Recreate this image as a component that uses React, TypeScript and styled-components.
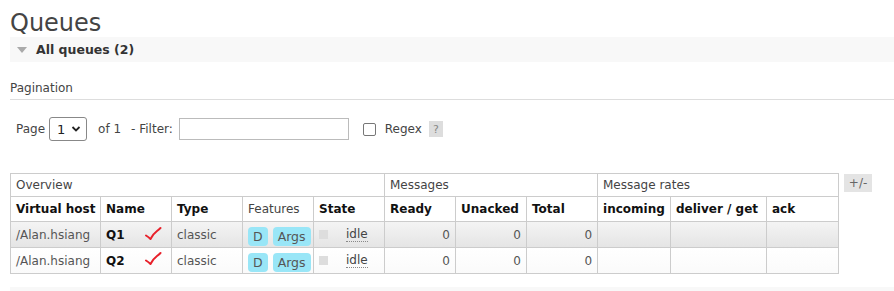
import React from "react";
import styled, { createGlobalStyle } from "styled-components";

const Global = createGlobalStyle`
  html, body { margin: 0; padding: 0; background: #fff; }
  body { font-family: "DejaVu Sans", Verdana, sans-serif; font-size: 12px; color: #444; }
`;

const Page = styled.div`
  padding: 0 0 0 10px;
  overflow: hidden;
`;

const Title = styled.h1`
  margin: 0;
  padding-top: 9px;
  height: 28px;
  font-size: 24px;
  font-weight: normal;
  line-height: 28px;
  color: #444;
`;

const SectionBar = styled.div`
  display: flex;
  align-items: center;
  gap: 9px;
  height: 25px;
  padding-left: 7px;
  background: #f8f8f8;
  font-weight: bold;
  font-size: 12.5px;
  color: #333;
`;

const Triangle = styled.span`
  width: 0;
  height: 0;
  border-left: 5px solid transparent;
  border-right: 5px solid transparent;
  border-top: 6px solid #aaa;
`;

const SubHeading = styled.h3`
  margin: 18px 0 0 0;
  padding-bottom: 3px;
  font-size: 12px;
  font-weight: normal;
  line-height: 16px;
  color: #444;
  border-bottom: 1px solid #ddd;
`;

const Controls = styled.div`
  display: flex;
  align-items: center;
  height: 24px;
  margin-top: 17px;
  padding-left: 6px;
  color: #444;
`;

const SelectBox = styled.div`
  display: flex;
  align-items: center;
  justify-content: space-between;
  box-sizing: border-box;
  width: 38px;
  height: 24px;
  margin: 0 11px 0 4px;
  padding: 0 5px 0 7px;
  border: 1px solid #888;
  border-radius: 3px;
  color: #222;
  font-size: 13px;
`;

const Label = styled.span<{ $gap?: number }>`
  margin-right: ${(p) => p.$gap ?? 0}px;
  white-space: pre;
`;

const TextInput = styled.div`
  box-sizing: border-box;
  width: 170px;
  height: 22px;
  margin-left: 6px;
  border: 1px solid #bbb;
  background: #fff;
`;

const Check = styled.span`
  box-sizing: border-box;
  width: 13px;
  height: 13px;
  margin: 0 9px 0 14px;
  border: 1px solid #777;
  border-radius: 2px;
`;

const Help = styled.span`
  display: inline-flex;
  align-items: center;
  justify-content: center;
  width: 14px;
  height: 16px;
  margin-left: 7px;
  background: #ddd;
  color: #888;
  font-size: 11px;
`;

const TableRow = styled.div`
  display: flex;
  align-items: flex-start;
  gap: 5px;
  margin-top: 32px;
`;

const Table = styled.table`
  border-collapse: collapse;
  table-layout: fixed;
  width: 828px;
  font-size: 12px;
`;

const GroupTh = styled.th`
  height: 22px;
  padding: 0 5px;
  border: 1px solid #ccc;
  text-align: left;
  font-weight: normal;
  color: #444;
`;

const Th = styled.th<{ $plain?: boolean }>`
  height: 24px;
  padding: 0 5px;
  border: 1px solid #ccc;
  text-align: left;
  font-weight: ${(p) => (p.$plain ? "normal" : "bold")};
  color: ${(p) => (p.$plain ? "#444" : "#111")};
  white-space: nowrap;
`;

const Tr = styled.tr<{ $alt?: boolean }>`
  background: ${(p) =>
    p.$alt ? "linear-gradient(#f4f4f4, #e4e4e4)" : "linear-gradient(#ffffff, #fafafa)"};
`;

const Td = styled.td<{ $num?: boolean; $bold?: boolean }>`
  height: 25px;
  padding: 0 5px;
  border: 1px solid #ccc;
  text-align: ${(p) => (p.$num ? "right" : "left")};
  color: ${(p) => (p.$bold ? "#111" : "#555")};
  font-weight: ${(p) => (p.$bold ? "bold" : "normal")};
  white-space: nowrap;
`;

const NameCell = styled.div`
  display: flex;
  align-items: center;
  justify-content: space-between;
  padding-right: 2px;
`;

const Badges = styled.div`
  display: flex;
  gap: 5px;
  padding-top: 3px;
`;

const Badge = styled.span`
  display: inline-block;
  padding: 2px 5px;
  border-radius: 4px;
  background: #99e6f7;
  color: #555;
  font-size: 12.5px;
`;

const StateCell = styled.div`
  display: flex;
  align-items: center;
  gap: 18px;
`;

const StateBox = styled.span`
  width: 9px;
  height: 9px;
  background: #ddd;
`;

const Idle = styled.span`
  color: #444;
  border-bottom: 1px dotted #888;
  line-height: 13px;
`;

const Toggle = styled.span`
  display: inline-flex;
  align-items: center;
  justify-content: center;
  width: 28px;
  height: 18px;
  margin-top: 1px;
  background: #e4e4e4;
  color: #666;
  font-size: 12px;
`;

const BottomBar = styled.div`
  height: 20px;
  margin-top: 13px;
  background: #f8f8f8;
`;

const Tick = ({ dy = 0 }: { dy?: number }) => (
  <svg width="20" height="16" viewBox="0 0 20 16" style={{ marginTop: dy }}>
    <path
      d="M2 9.5 Q4.5 11 6.5 13 Q9 8 13 5 Q15 3.5 16.5 2"
      fill="none"
      stroke="#e8202a"
      strokeWidth="2"
      strokeLinecap="round"
      strokeLinejoin="round"
    />
  </svg>
);

const rows = [
  { vhost: "/Alan.hsiang", name: "Q1", dy: -2 },
  { vhost: "/Alan.hsiang", name: "Q2", dy: -4 },
];

const widths = [90, 71, 71, 71, 71, 71, 71, 71, 73, 96, 72];

export default function App() {
  return (
    <>
      <Global />
      <Page>
        <Title>Queues</Title>
        <SectionBar>
          <Triangle />
          <span>All queues (2)</span>
        </SectionBar>
        <SubHeading>Pagination</SubHeading>
        <Controls>
          <Label>Page</Label>
          <SelectBox>
            <span>1</span>
            <svg width="10" height="8" viewBox="0 0 10 8">
              <path d="M1.5 2 L5 5.5 L8.5 2" fill="none" stroke="#222" strokeWidth="1.8" />
            </svg>
          </SelectBox>
          <Label $gap={10}>of 1</Label>
          <Label>- Filter:</Label>
          <TextInput />
          <Check />
          <Label>Regex</Label>
          <Help>?</Help>
        </Controls>
        <TableRow>
          <Table>
            <colgroup>
              {widths.map((w, i) => (
                <col key={i} style={{ width: w }} />
              ))}
            </colgroup>
            <thead>
              <tr>
                <GroupTh colSpan={5}>Overview</GroupTh>
                <GroupTh colSpan={3}>Messages</GroupTh>
                <GroupTh colSpan={3}>Message rates</GroupTh>
              </tr>
              <tr>
                <Th>Virtual host</Th>
                <Th>Name</Th>
                <Th>Type</Th>
                <Th $plain>Features</Th>
                <Th>State</Th>
                <Th>Ready</Th>
                <Th>Unacked</Th>
                <Th>Total</Th>
                <Th>incoming</Th>
                <Th>deliver / get</Th>
                <Th>ack</Th>
              </tr>
            </thead>
            <tbody>
              {rows.map((r, i) => (
                <Tr key={r.name} $alt={i === 0}>
                  <Td>{r.vhost}</Td>
                  <Td $bold>
                    <NameCell>
                      <span>{r.name}</span>
                      <Tick dy={r.dy} />
                    </NameCell>
                  </Td>
                  <Td>classic</Td>
                  <Td>
                    <Badges>
                      <Badge>D</Badge>
                      <Badge>Args</Badge>
                    </Badges>
                  </Td>
                  <Td>
                    <StateCell>
                      <StateBox />
                      <Idle>idle</Idle>
                    </StateCell>
                  </Td>
                  <Td $num>0</Td>
                  <Td $num>0</Td>
                  <Td $num>0</Td>
                  <Td />
                  <Td />
                  <Td />
                </Tr>
              ))}
            </tbody>
          </Table>
          <Toggle>+/-</Toggle>
        </TableRow>
        <BottomBar />
      </Page>
    </>
  );
}
